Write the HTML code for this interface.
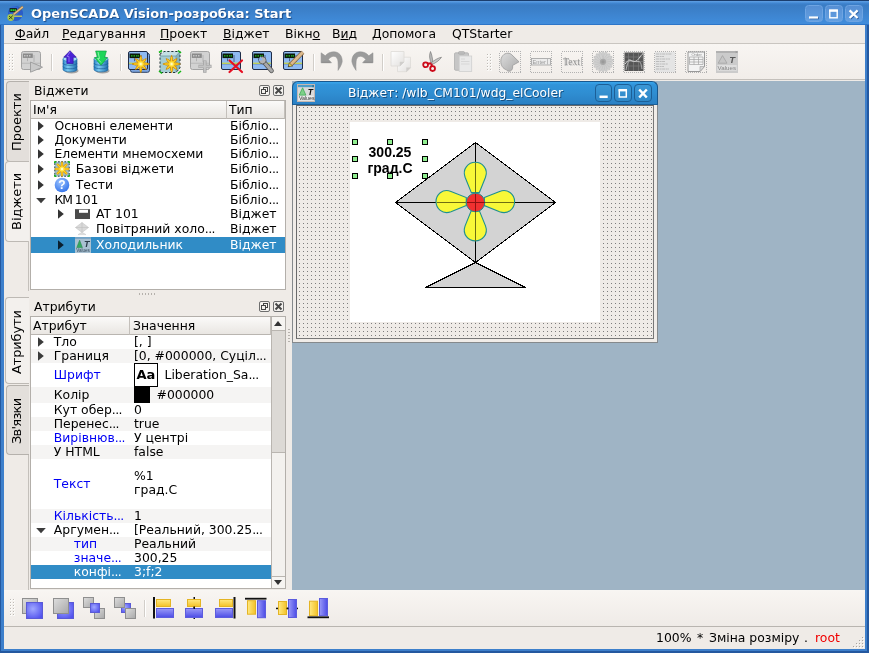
<!DOCTYPE html>
<html><head><meta charset="utf-8"><title>OpenSCADA Vision</title>
<style>
*{box-sizing:border-box;margin:0;padding:0}
html,body{width:869px;height:653px;overflow:hidden;background:#efebe7}
body{position:relative;will-change:transform;font-family:"DejaVu Sans","Liberation Sans",sans-serif;font-size:12.4px;color:#000}
div,span,svg{position:absolute}
#frame{left:0;top:0;width:869px;height:653px;background:#3d7fcb;border:solid #24589f;border-width:0 2px 2px 1px}
#titlebar{left:0;top:0;width:869px;height:25px;background:linear-gradient(#1b3e6e 0,#1b3e6e 1px,#5c9de2 1px,#5698de 2px,#4187d3 3px,#3a7cc4 5px,#3b7fc8 9px,#418ddc 24px,#2d75c8 24px)}
#title{left:31px;top:6px;font-weight:bold;font-size:13px;color:#fff;white-space:nowrap;text-shadow:1px 1px 1px #1b4a85}
.tbtn{top:4.5px;width:17.5px;height:17.5px;border:1px solid #6ea4e2;border-radius:3.5px;background:linear-gradient(#568fd4,#639fe1)}
#client{left:4px;top:25px;width:861px;height:624px;background:#efebe7}
#menubar{left:0;top:0;width:861px;height:18px;background:#efebe7}
#menubar span{top:1px;white-space:nowrap}
u{text-decoration:underline;text-underline-offset:1px}
#toolbar{left:0;top:18px;width:861px;height:37px;border-top:1px solid #c9c5c0;border-bottom:1px solid #c4c0bb;background:linear-gradient(#f8f5f2,#f1ede9)}
#mdi{left:288px;top:56px;width:573px;height:509px;background:#9fb4c5}
#btoolbar{left:0;top:565px;width:861px;height:37px;border-top:1px solid #f8f6f3;border-bottom:1px solid #b9b5b0;background:linear-gradient(#f8f5f2,#efebe7)}
#status{left:0;top:602px;width:861px;height:22px;background:#efebe7}
#status span{top:3px;white-space:nowrap}
.ic{top:7px;width:22px;height:22px}
.sep{top:10px;width:2px;height:17px;border-left:1px solid #c8c4bf;border-right:1px solid #fff}
.hdl{top:10px;width:5px;height:17px;background-image:radial-gradient(circle,#b9b5b0 0.7px,transparent 1px);background-size:3px 3px}
/* dock */
.vtab{left:3px;width:22px;border:1px solid #b5b1ac;border-right:none;border-radius:4px 0 0 4px;background:#e3dfdb}
.vtab.act{left:1px;width:24px;background:#f3f0ed;border-color:#bdb9b4}
.vtxt{white-space:nowrap;transform-origin:0 0;transform:rotate(-90deg);font-size:13px;line-height:16px;height:16px}
.dtitle{left:30px;white-space:nowrap}
  .dbtn{width:11px;height:11px;border:1px solid #6e6e6e;border-radius:2px;background:#f4f2ef}
.tree{left:26px;width:256px;background:#fff;border:1px solid #b3afaa;overflow:hidden}
.hdr{left:0;top:0;height:17px;background:linear-gradient(#fbfaf9,#e9e6e2);border-bottom:1px solid #b9b5b0;border-right:1px solid #c4c0bb}
.hdr span{top:1px;left:3px;white-space:nowrap}
.r{left:0;white-space:nowrap}
.r span{white-space:nowrap}
i{font-style:normal;letter-spacing:-.55px}
.alt{background:#f5f4f3}
.sel{background:#308cc6;color:#fff}
.blue{color:#0000f5}
.arr{width:0;height:0;border-left:6px solid #333;border-top:4px solid transparent;border-bottom:4px solid transparent}
.arrd{width:0;height:0;border-top:6px solid #333;border-left:4px solid transparent;border-right:4px solid transparent}
.sbtn{top:3px;width:17.500px;height:18px;border:1px solid #1c5f97;border-radius:4px;background:linear-gradient(#3b97d6,#2e88c8)}
.h{width:6px;height:6px;border:1px solid #000;background:#90ee90}
</style></head><body>
<div id="frame"></div>
<div id="titlebar">
<svg width="17" height="17" viewBox="0 0 17 17" style="left:7px;top:5px"><circle cx="8.500" cy="8.500" r="7.500" fill="#2a5cc8"/><circle cx="7" cy="6" r="5" fill="#3d78dc" opacity=".6"/><rect x="2.500" y="3" width="7.500" height="4.200" rx=".8" fill="#16242e"/><path d="M3.500 5.100h5.500" stroke="#25d825" stroke-width="1.600" stroke-dasharray="1.500 .5"/><path d="M6.500 9.500L15.800 1.800" stroke="#8a6a40" stroke-width="2.600"/><path d="M6.500 9.500L15.800 1.800" stroke="#e0bc88" stroke-width="1.600"/><path d="M6 11.200h9" stroke="#d8dc50" stroke-width="1.200"/><circle cx="3.800" cy="12.500" r="3.400" fill="#a9c94c"/><path d="M1.800 14.200l4-3.600M2 11l3.500 3" stroke="#2c3a14" stroke-width=".9"/></svg>
<div id="title">OpenSCADA Vision-розробка: Start</div>
<div class="tbtn" style="left:805px"><svg width="16" height="16" style="left:0;top:0"><path d="M3.800 12.300h9" stroke="#2a5da0" stroke-width="2"/><path d="M3 11.500h9" stroke="#fff" stroke-width="2.200"/></svg></div>
<div class="tbtn" style="left:825px"><svg width="16" height="16" style="left:0;top:0"><rect x="3.800" y="4.400" width="7.400" height="7.400" fill="none" stroke="#fff" stroke-width="1.400"/><path d="M3.100 4.600h8.800" stroke="#fff" stroke-width="2.400"/></svg></div>
<div class="tbtn" style="left:845px"><svg width="16" height="16" style="left:0;top:0"><path d="M4.400 5.200l8 7.600M12.400 5.200l-8 7.600" stroke="#2a5da0" stroke-width="2"/><path d="M3.600 4.400l8 7.600M11.600 4.400l-8 7.600" stroke="#fff" stroke-width="2.300"/></svg></div>
</div>
<div id="client">
<div id="menubar">
<span style="left:11px"><u>Ф</u>айл</span>
<span style="left:58px"><u>Р</u>едагування</span>
<span style="left:156px"><u>П</u>роект</span>
<span style="left:219px"><u>В</u>іджет</span>
<span style="left:281px">Вікн<u>о</u></span>
<span style="left:328px">В<u>и</u>д</span>
<span style="left:368px"><u>Д</u>опомога</span>
<span style="left:448px">QTStarter</span>
</div>
<svg width="0" height="0" style="left:0;top:0"><defs>
<linearGradient id="gcyl" x1="0" x2="1"><stop offset="0" stop-color="#2e86c8"/><stop offset=".35" stop-color="#7ccbf2"/><stop offset="1" stop-color="#1f6eae"/></linearGradient>
<linearGradient id="gblue" x1="0" y1="0" x2="1" y2="1"><stop offset="0" stop-color="#9ab8ff"/><stop offset="1" stop-color="#4a4af0"/></linearGradient>
<radialGradient id="gblue2" cx=".4" cy=".4" r=".7"><stop offset="0" stop-color="#a0a8ff"/><stop offset="1" stop-color="#5252ee"/></radialGradient>
<linearGradient id="ggray" x1="0" y1="0" x2="1" y2="1"><stop offset="0" stop-color="#dedede"/><stop offset="1" stop-color="#a8a8a8"/></linearGradient>
<linearGradient id="gyel" x1="0" y1="0" x2="0" y2="1"><stop offset="0" stop-color="#ffe982"/><stop offset="1" stop-color="#f3c228"/></linearGradient>
<linearGradient id="gyelh" x1="0" y1="0" x2="1" y2="0"><stop offset="0" stop-color="#ffe982"/><stop offset="1" stop-color="#f3c228"/></linearGradient>
<linearGradient id="gbl" x1="0" y1="0" x2="0" y2="1"><stop offset="0" stop-color="#9a9af8"/><stop offset="1" stop-color="#4c4ce6"/></linearGradient>
<linearGradient id="gblh" x1="0" y1="0" x2="1" y2="0"><stop offset="0" stop-color="#9a9af8"/><stop offset="1" stop-color="#4c4ce6"/></linearGradient>
<radialGradient id="gstar"><stop offset="0" stop-color="#fff27a"/><stop offset=".45" stop-color="#ffd92e"/><stop offset="1" stop-color="#e09a00"/></radialGradient>
<linearGradient id="gpaper" x1="0" y1="0" x2="1" y2="1"><stop offset="0" stop-color="#ffffff"/><stop offset="1" stop-color="#e2e0de"/></linearGradient>
</defs></svg>
<div id="toolbar"></div>
<div style="left:5px;top:29px;width:2px;height:2px;background:#fbfaf8"></div><div style="left:5px;top:29px;width:1px;height:1px;background:#bfbbb6"></div>
<div style="left:5px;top:32px;width:2px;height:2px;background:#fbfaf8"></div><div style="left:5px;top:32px;width:1px;height:1px;background:#bfbbb6"></div>
<div style="left:5px;top:35px;width:2px;height:2px;background:#fbfaf8"></div><div style="left:5px;top:35px;width:1px;height:1px;background:#bfbbb6"></div>
<div style="left:5px;top:38px;width:2px;height:2px;background:#fbfaf8"></div><div style="left:5px;top:38px;width:1px;height:1px;background:#bfbbb6"></div>
<div style="left:5px;top:41px;width:2px;height:2px;background:#fbfaf8"></div><div style="left:5px;top:41px;width:1px;height:1px;background:#bfbbb6"></div>
<div style="left:5px;top:44px;width:2px;height:2px;background:#fbfaf8"></div><div style="left:5px;top:44px;width:1px;height:1px;background:#bfbbb6"></div>
<div style="left:8px;top:29px;width:2px;height:2px;background:#fbfaf8"></div><div style="left:8px;top:29px;width:1px;height:1px;background:#bfbbb6"></div>
<div style="left:8px;top:32px;width:2px;height:2px;background:#fbfaf8"></div><div style="left:8px;top:32px;width:1px;height:1px;background:#bfbbb6"></div>
<div style="left:8px;top:35px;width:2px;height:2px;background:#fbfaf8"></div><div style="left:8px;top:35px;width:1px;height:1px;background:#bfbbb6"></div>
<div style="left:8px;top:38px;width:2px;height:2px;background:#fbfaf8"></div><div style="left:8px;top:38px;width:1px;height:1px;background:#bfbbb6"></div>
<div style="left:8px;top:41px;width:2px;height:2px;background:#fbfaf8"></div><div style="left:8px;top:41px;width:1px;height:1px;background:#bfbbb6"></div>
<div style="left:8px;top:44px;width:2px;height:2px;background:#fbfaf8"></div><div style="left:8px;top:44px;width:1px;height:1px;background:#bfbbb6"></div>
<svg width="22" height="22" viewBox="0 0 22 22" style="left:17px;top:26px;overflow:visible"><g transform="translate(0 0)"><rect x=".5" y=".5" width="19" height="18" rx="2" fill="#d2d2d2" stroke="#a3a3a3"/><rect x="1.8" y="2.5" width="10" height="4.4" fill="#8a8a8a"/><path d="M3 4.7h1.5M5.5 4.7h1.5M8 4.7h1.5" stroke="#c4c4c4" stroke-width="1.4"/><path d="M6.5 7.2v3M13 4v7" stroke="#b2b2b2" stroke-width="1"/><path d="M1 12.3h18" stroke="#bdbdbd" stroke-width="1.2"/></g><path d="M9.5 11L21.5 16.2L9.5 21.2Z" fill="#c9c9c9" stroke="#9c9c9c" stroke-width=".9"/></svg>
<div style="left:47px;top:29px;width:1px;height:17px;background:#d2cec9"></div><div style="left:48px;top:29px;width:1px;height:17px;background:#fff"></div>
<svg width="22" height="22" viewBox="0 0 22 22" style="left:58px;top:26px;overflow:visible"><ellipse cx="8" cy="19" rx="7" ry="2.6" fill="#1c1c1c" opacity=".35" transform="translate(1.6 .8)"/><path d="M1 8v10.5c0 3.2 14 3.2 14 0V8Z" fill="url(#gcyl)" stroke="#1b5f9a" stroke-width=".6"/><path d="M1 12c0 3 14 3 14 0M1 15.5c0 3 14 3 14 0" fill="none" stroke="#1b5f9a" stroke-width=".7"/><ellipse cx="8" cy="8" rx="7" ry="2.6" fill="#a5dcf6" stroke="#2b7fbd" stroke-width=".6"/><path d="M8-0.3L14.3 6.2H11.2V12.5H4.8V6.2H1.7Z" fill="#4a22d6" stroke="#2c129a" stroke-width=".6"/><path d="M8 1L5 5.5H7V11" stroke="#8a6af0" stroke-width="1" fill="none"/></svg>
<svg width="22" height="22" viewBox="0 0 22 22" style="left:89px;top:26px;overflow:visible"><ellipse cx="8" cy="19" rx="7" ry="2.6" fill="#1c1c1c" opacity=".35" transform="translate(1.6 .8)"/><path d="M1 8v10.5c0 3.2 14 3.2 14 0V8Z" fill="url(#gcyl)" stroke="#1b5f9a" stroke-width=".6"/><path d="M1 12c0 3 14 3 14 0M1 15.5c0 3 14 3 14 0" fill="none" stroke="#1b5f9a" stroke-width=".7"/><ellipse cx="8" cy="8" rx="7" ry="2.6" fill="#a5dcf6" stroke="#2b7fbd" stroke-width=".6"/><path d="M2.6 0H13.4L11.6 6.5H14.6L8 14.2L1.4 6.5H4.4Z" fill="#1fd65a" stroke="#0c9a3a" stroke-width=".6"/><path d="M5 1L6.5 7.5H4.5L8 11.5" stroke="#8af0a8" stroke-width="1" fill="none"/></svg>
<div style="left:116px;top:29px;width:1px;height:17px;background:#d2cec9"></div><div style="left:117px;top:29px;width:1px;height:17px;background:#fff"></div>
<svg width="22" height="22" viewBox="0 0 22 22" style="left:124px;top:26px;overflow:visible"><rect x="2.5" y="2.3" width="19" height="19" rx="2" fill="#7ea6e0" stroke="#2c4266"/><g transform="translate(0 0)"><rect x=".5" y=".5" width="19" height="18" rx="1.500" fill="#8fbaf2" stroke="#1e2c48"/><rect x="1.5" y="2.5" width="10.5" height="4.6" fill="#0a1a0a"/><path d="M3 4.8h1.5M5.5 4.8h1.5M8 4.8h1.5M10 4.8h1" stroke="#25c425" stroke-width="1.300"/><path d="M6.5 7.2v3M13 4v7" stroke="#4a6488" stroke-width="1"/><path d="M1 12.3h18" stroke="#d2de3c" stroke-width="1.3"/><path d="M1 13.3h18" stroke="#6f93c8" stroke-width=".8"/></g><g transform="translate(12.8 13)"><g fill="#f0ae00" stroke="#d28c00" stroke-width=".8" stroke-linejoin="round"><path d="M-.500 0L-1.150 -5.22L0 -8.70L1.150 -5.22L.500 0Z" transform="rotate(0)"/><path d="M-.500 0L-1.150 -4.59L0 -7.66L1.150 -4.59L.500 0Z" transform="rotate(45)"/><path d="M-.500 0L-1.150 -5.22L0 -8.70L1.150 -5.22L.500 0Z" transform="rotate(90)"/><path d="M-.500 0L-1.150 -4.59L0 -7.66L1.150 -4.59L.500 0Z" transform="rotate(135)"/><path d="M-.500 0L-1.150 -5.22L0 -8.70L1.150 -5.22L.500 0Z" transform="rotate(180)"/><path d="M-.500 0L-1.150 -4.59L0 -7.66L1.150 -4.59L.500 0Z" transform="rotate(225)"/><path d="M-.500 0L-1.150 -5.22L0 -8.70L1.150 -5.22L.500 0Z" transform="rotate(270)"/><path d="M-.500 0L-1.150 -4.59L0 -7.66L1.150 -4.59L.500 0Z" transform="rotate(315)"/></g><g stroke="#ffd52a" stroke-width="1" fill="none"><path d="M0 0V-6.96" transform="rotate(0)"/><path d="M0 0V-6.12" transform="rotate(45)"/><path d="M0 0V-6.96" transform="rotate(90)"/><path d="M0 0V-6.12" transform="rotate(135)"/><path d="M0 0V-6.96" transform="rotate(180)"/><path d="M0 0V-6.12" transform="rotate(225)"/><path d="M0 0V-6.96" transform="rotate(270)"/><path d="M0 0V-6.12" transform="rotate(315)"/></g><circle r="3" fill="#ffd92e"/><circle r="2" fill="#ffee6e"/><circle r="1" fill="#fffbd0"/></g></svg>
<svg width="22" height="22" viewBox="0 0 22 22" style="left:155px;top:26px;overflow:visible"><path d="M1 5L5 0.500H21V17L17 21.500H1Z" fill="#a6ccd3"/><path d="M1 5L5 .500H21L17 5Z" fill="#c4e0e4"/><path d="M17 5L21 .500V17L17 21.500Z" fill="#86b4bd"/><path d="M1 5H17V21.500M17 5L21 0.500" fill="none" stroke="#6f9aa2" stroke-width=".8"/><path d="M1 3L5 0.5H21V17L17 21.5H1Z" fill="none" stroke="#22343a" stroke-width="1" stroke-dasharray="2.2 1.8"/><path d="M0 1.5l3-2M0 20l3 2.5M19-0.5l3 2.5M19 22.5l3-2.5" stroke="#14b814" stroke-width="1.6"/><g transform="translate(12.6 13)"><g fill="#f0ae00" stroke="#d28c00" stroke-width=".8" stroke-linejoin="round"><path d="M-.500 0L-1.150 -5.22L0 -8.70L1.150 -5.22L.500 0Z" transform="rotate(0)"/><path d="M-.500 0L-1.150 -4.59L0 -7.66L1.150 -4.59L.500 0Z" transform="rotate(45)"/><path d="M-.500 0L-1.150 -5.22L0 -8.70L1.150 -5.22L.500 0Z" transform="rotate(90)"/><path d="M-.500 0L-1.150 -4.59L0 -7.66L1.150 -4.59L.500 0Z" transform="rotate(135)"/><path d="M-.500 0L-1.150 -5.22L0 -8.70L1.150 -5.22L.500 0Z" transform="rotate(180)"/><path d="M-.500 0L-1.150 -4.59L0 -7.66L1.150 -4.59L.500 0Z" transform="rotate(225)"/><path d="M-.500 0L-1.150 -5.22L0 -8.70L1.150 -5.22L.500 0Z" transform="rotate(270)"/><path d="M-.500 0L-1.150 -4.59L0 -7.66L1.150 -4.59L.500 0Z" transform="rotate(315)"/></g><g stroke="#ffd52a" stroke-width="1" fill="none"><path d="M0 0V-6.96" transform="rotate(0)"/><path d="M0 0V-6.12" transform="rotate(45)"/><path d="M0 0V-6.96" transform="rotate(90)"/><path d="M0 0V-6.12" transform="rotate(135)"/><path d="M0 0V-6.96" transform="rotate(180)"/><path d="M0 0V-6.12" transform="rotate(225)"/><path d="M0 0V-6.96" transform="rotate(270)"/><path d="M0 0V-6.12" transform="rotate(315)"/></g><circle r="3" fill="#ffd92e"/><circle r="2" fill="#ffee6e"/><circle r="1" fill="#fffbd0"/></g></svg>
<svg width="22" height="22" viewBox="0 0 22 22" style="left:186px;top:26px;overflow:visible"><g transform="translate(0 0)"><rect x=".5" y=".5" width="19" height="18" rx="2" fill="#d2d2d2" stroke="#a3a3a3"/><rect x="1.8" y="2.5" width="10" height="4.4" fill="#8a8a8a"/><path d="M3 4.7h1.5M5.5 4.7h1.5M8 4.7h1.5" stroke="#c4c4c4" stroke-width="1.4"/><path d="M6.5 7.2v3M13 4v7" stroke="#b2b2b2" stroke-width="1"/><path d="M1 12.3h18" stroke="#bdbdbd" stroke-width="1.2"/></g><path d="M8.5 15.4H21.5M14.8 9.5V21.8" stroke="#a0a0a0" stroke-width="3.4"/><path d="M9 15.4H21M14.8 10V21.3" stroke="#c4c4c4" stroke-width="2"/></svg>
<svg width="22" height="22" viewBox="0 0 22 22" style="left:217px;top:26px;overflow:visible"><g transform="translate(0 0)"><rect x=".5" y=".5" width="19" height="18" rx="1.500" fill="#8fbaf2" stroke="#1e2c48"/><rect x="1.5" y="2.5" width="10.5" height="4.6" fill="#0a1a0a"/><path d="M3 4.8h1.5M5.5 4.8h1.5M8 4.8h1.5M10 4.8h1" stroke="#25c425" stroke-width="1.300"/><path d="M6.5 7.2v3M13 4v7" stroke="#4a6488" stroke-width="1"/><path d="M1 12.3h18" stroke="#d2de3c" stroke-width="1.3"/><path d="M1 13.3h18" stroke="#6f93c8" stroke-width=".8"/></g><path d="M8.5 9.5L21 21M21 9.5L8.5 21" stroke="#e60f22" stroke-width="2.2" stroke-linecap="round"/></svg>
<svg width="22" height="22" viewBox="0 0 22 22" style="left:248px;top:26px;overflow:visible"><g transform="translate(0 0)"><rect x=".5" y=".5" width="19" height="18" rx="1.500" fill="#8fbaf2" stroke="#1e2c48"/><rect x="1.5" y="2.5" width="10.5" height="4.6" fill="#0a1a0a"/><path d="M3 4.8h1.5M5.5 4.8h1.5M8 4.8h1.5M10 4.8h1" stroke="#25c425" stroke-width="1.300"/><path d="M6.5 7.2v3M13 4v7" stroke="#4a6488" stroke-width="1"/><path d="M1 12.3h18" stroke="#d2de3c" stroke-width="1.3"/><path d="M1 13.3h18" stroke="#6f93c8" stroke-width=".8"/></g><path d="M11.5 10.5L19.5 19.8" stroke="#555" stroke-width="4.6" stroke-linecap="round"/><path d="M11.5 10.5L19.5 19.8" stroke="#a9a9a9" stroke-width="3" stroke-linecap="round"/><circle cx="10.5" cy="9.3" r="3.6" fill="#b4b4b4" stroke="#555" stroke-width=".8"/><path d="M8.2 5.2L11 9L6.4 10.2Z" fill="#8db6ee"/></svg>
<svg width="22" height="22" viewBox="0 0 22 22" style="left:279px;top:26px;overflow:visible"><g transform="translate(0 0)"><rect x=".5" y=".5" width="19" height="18" rx="1.500" fill="#8fbaf2" stroke="#1e2c48"/><rect x="1.5" y="2.5" width="10.5" height="4.6" fill="#0a1a0a"/><path d="M3 4.8h1.5M5.5 4.8h1.5M8 4.8h1.5M10 4.8h1" stroke="#25c425" stroke-width="1.300"/><path d="M6.5 7.2v3M13 4v7" stroke="#4a6488" stroke-width="1"/><path d="M1 12.3h18" stroke="#d2de3c" stroke-width="1.3"/><path d="M1 13.3h18" stroke="#6f93c8" stroke-width=".8"/></g><path d="M7.5 13.8L19.8 1.2" stroke="#7c5c3a" stroke-width="4.2"/><path d="M7.5 13.8L19.8 1.2" stroke="#dcb98c" stroke-width="3"/><path d="M5.2 15.8L6.2 11.8L9.6 15Z" fill="#e8d44a" stroke="#4a3a1a" stroke-width=".6"/><path d="M5.2 15.8l1.4-.4-.9-1Z" fill="#222"/></svg>
<div style="left:309px;top:29px;width:1px;height:17px;background:#d2cec9"></div><div style="left:310px;top:29px;width:1px;height:17px;background:#fff"></div>
<svg width="22" height="22" viewBox="0 0 22 22" style="left:317px;top:26px;overflow:visible"><path d="M0.1 1.8L0.1 11.8L10.5 11.8L7.4 8.4C9 6.5 11 5.3 12.9 5.3C15.5 5.5 17 8 17 10.8C17.3 14 17.2 17 17 19.4C19 16.5 20.5 14 21.2 10.8C21.5 5 18 0.8 12.9 0.8C9.5 0.8 6.5 2 4.3 4.800Z" fill="#9b9b9b" stroke="#8f8f8f" stroke-width=".5"/><path d="M0.6 11.300H9.5" stroke="#878787" stroke-width=".8"/></svg>
<svg width="22" height="22" viewBox="0 0 22 22" style="left:348px;top:26px;overflow:visible"><g transform="translate(21.1 0) scale(-1 1)"><path d="M0.1 1.8L0.1 11.8L10.5 11.8L7.4 8.4C9 6.5 11 5.3 12.9 5.3C15.5 5.5 17 8 17 10.8C17.3 14 17.2 17 17 19.4C19 16.5 20.5 14 21.2 10.8C21.5 5 18 0.8 12.9 0.8C9.5 0.8 6.5 2 4.3 4.800Z" fill="#9b9b9b" stroke="#8f8f8f" stroke-width=".5"/><path d="M0.6 11.300H9.5" stroke="#878787" stroke-width=".8"/></g></svg>
<div style="left:378px;top:29px;width:1px;height:17px;background:#d2cec9"></div><div style="left:379px;top:29px;width:1px;height:17px;background:#fff"></div>
<svg width="22" height="22" viewBox="0 0 22 22" style="left:386px;top:26px;overflow:visible"><g transform="translate(7 5.7)"><path d="M.5 .5H13.5V11L9.5 15H.5Z" fill="url(#gpaper)" stroke="#dddad7" stroke-width=".8"/><path d="M13.5 11H9.5V15Z" fill="#cfcdcb" stroke="#d3d1ce" stroke-width=".5"/></g><g transform="translate(.5 0)"><path d="M.5 .5H13.5V11L9.5 15H.5Z" fill="url(#gpaper)" stroke="#dddad7" stroke-width=".8"/><path d="M13.5 11H9.5V15Z" fill="#cfcdcb" stroke="#d3d1ce" stroke-width=".5"/></g></svg>
<svg width="22" height="22" viewBox="0 0 22 22" style="left:417px;top:26px;overflow:visible"><path d="M9.5 0.5C8 4 8.3 8 10.3 12.2L11.8 11C11.5 7 10.8 3.5 9.5 0.5Z" fill="#b9b9b9" stroke="#6e6e6e" stroke-width=".6"/><path d="M20.5 6.2C17 7 13.5 9 10 12L11.4 13.4C15 11.5 18.5 9.5 20.5 6.200Z" fill="#c9c9c9" stroke="#6e6e6e" stroke-width=".6"/><circle cx="4.6" cy="13.8" r="2.400" fill="none" stroke="#cc0a1a" stroke-width="1.800"/><circle cx="11.600" cy="17.600" r="2.400" fill="none" stroke="#cc0a1a" stroke-width="1.800"/><path d="M6.8 12.8L10 12.2M10.6 15.2L10.6 12.6" stroke="#cc0a1a" stroke-width="2"/></svg>
<svg width="22" height="22" viewBox="0 0 22 22" style="left:448px;top:26px;overflow:visible"><rect x="2.5" y="1.8" width="14" height="17.5" rx="1.2" fill="#c6c6c6" stroke="#b0b0b0" stroke-width=".8"/><rect x="6.5" y=".6" width="6" height="2.6" rx="1" fill="#bdbdbd" stroke="#a6a6a6" stroke-width=".6"/><rect x="7.2" y="5" width="12.5" height="15.5" fill="#e9e9e9" stroke="#cfcfcf" stroke-width=".8"/><path d="M9 8h4M9 10.5h8.5M9 13h8.5" stroke="#d2d2d2" stroke-width=".8"/></svg>
<div style="left:483px;top:29px;width:2px;height:2px;background:#fbfaf8"></div><div style="left:483px;top:29px;width:1px;height:1px;background:#bfbbb6"></div>
<div style="left:483px;top:32px;width:2px;height:2px;background:#fbfaf8"></div><div style="left:483px;top:32px;width:1px;height:1px;background:#bfbbb6"></div>
<div style="left:483px;top:35px;width:2px;height:2px;background:#fbfaf8"></div><div style="left:483px;top:35px;width:1px;height:1px;background:#bfbbb6"></div>
<div style="left:483px;top:38px;width:2px;height:2px;background:#fbfaf8"></div><div style="left:483px;top:38px;width:1px;height:1px;background:#bfbbb6"></div>
<div style="left:483px;top:41px;width:2px;height:2px;background:#fbfaf8"></div><div style="left:483px;top:41px;width:1px;height:1px;background:#bfbbb6"></div>
<div style="left:483px;top:44px;width:2px;height:2px;background:#fbfaf8"></div><div style="left:483px;top:44px;width:1px;height:1px;background:#bfbbb6"></div>
<div style="left:486px;top:29px;width:2px;height:2px;background:#fbfaf8"></div><div style="left:486px;top:29px;width:1px;height:1px;background:#bfbbb6"></div>
<div style="left:486px;top:32px;width:2px;height:2px;background:#fbfaf8"></div><div style="left:486px;top:32px;width:1px;height:1px;background:#bfbbb6"></div>
<div style="left:486px;top:35px;width:2px;height:2px;background:#fbfaf8"></div><div style="left:486px;top:35px;width:1px;height:1px;background:#bfbbb6"></div>
<div style="left:486px;top:38px;width:2px;height:2px;background:#fbfaf8"></div><div style="left:486px;top:38px;width:1px;height:1px;background:#bfbbb6"></div>
<div style="left:486px;top:41px;width:2px;height:2px;background:#fbfaf8"></div><div style="left:486px;top:41px;width:1px;height:1px;background:#bfbbb6"></div>
<div style="left:486px;top:44px;width:2px;height:2px;background:#fbfaf8"></div><div style="left:486px;top:44px;width:1px;height:1px;background:#bfbbb6"></div>
<svg width="22" height="22" viewBox="0 0 22 22" style="left:495px;top:26px;overflow:visible"><rect x=".5" y=".5" width="21" height="21" fill="none" stroke="#b2b2b2" stroke-width="1" stroke-dasharray="1 1" shape-rendering="crispEdges"/><path d="M9 2.2C4.5 2.2 1.8 6 1.8 10.5C1.8 14 3.5 17.5 7.5 18.8C8 20 9.5 20.5 11.5 20C13.5 19 14 16.5 13.5 14.5L20 10.8L13 4C12 2.8 10.5 2.2 9 2.2Z" fill="url(#ggray)" stroke="#9a9a9a" stroke-width=".8"/></svg>
<svg width="22" height="22" viewBox="0 0 22 22" style="left:526px;top:26px;overflow:visible"><rect x=".5" y=".5" width="21" height="21" fill="none" stroke="#b2b2b2" stroke-width="1" stroke-dasharray="1 1" shape-rendering="crispEdges"/><rect x="1.5" y="7.5" width="19" height="6.5" fill="#ececec" stroke="#a8a8a8" stroke-width=".9"/><path d="M17.5 8v5.500" stroke="#b0b0b0" stroke-width=".8"/><text x="2.6" y="13" font-family="Liberation Sans,sans-serif" font-size="5.6" fill="#9a9a9a">Enter</text></svg>
<svg width="22" height="22" viewBox="0 0 22 22" style="left:557px;top:26px;overflow:visible"><rect x=".5" y=".5" width="21" height="21" fill="none" stroke="#b2b2b2" stroke-width="1" stroke-dasharray="1 1" shape-rendering="crispEdges"/><text x="3" y="14.600" font-family="Liberation Serif,serif" font-size="9.500" fill="#cfcfcf">Text</text><text x="2.200" y="13.800" font-family="Liberation Serif,serif" font-size="9.500" fill="#8f8f8f">Text</text><path d="M4.200 6v9M20.500 6v9" stroke="#a8a8a8" stroke-width=".7"/></svg>
<svg width="22" height="22" viewBox="0 0 22 22" style="left:588px;top:26px;overflow:visible"><rect x=".5" y=".5" width="21" height="21" fill="none" stroke="#b2b2b2" stroke-width="1" stroke-dasharray="1 1" shape-rendering="crispEdges"/><g transform="translate(11 10.8)"><ellipse cx="0" cy="-6.3" rx="1.5" ry="4.2" transform="rotate(0)" fill="#cfcfcf" stroke="#b9b9b9" stroke-width=".4"/><ellipse cx="0" cy="-6.3" rx="1.5" ry="4.2" transform="rotate(20)" fill="#cfcfcf" stroke="#b9b9b9" stroke-width=".4"/><ellipse cx="0" cy="-6.3" rx="1.5" ry="4.2" transform="rotate(40)" fill="#cfcfcf" stroke="#b9b9b9" stroke-width=".4"/><ellipse cx="0" cy="-6.3" rx="1.5" ry="4.2" transform="rotate(60)" fill="#cfcfcf" stroke="#b9b9b9" stroke-width=".4"/><ellipse cx="0" cy="-6.3" rx="1.5" ry="4.2" transform="rotate(80)" fill="#cfcfcf" stroke="#b9b9b9" stroke-width=".4"/><ellipse cx="0" cy="-6.3" rx="1.5" ry="4.2" transform="rotate(100)" fill="#cfcfcf" stroke="#b9b9b9" stroke-width=".4"/><ellipse cx="0" cy="-6.3" rx="1.5" ry="4.2" transform="rotate(120)" fill="#cfcfcf" stroke="#b9b9b9" stroke-width=".4"/><ellipse cx="0" cy="-6.3" rx="1.5" ry="4.2" transform="rotate(140)" fill="#cfcfcf" stroke="#b9b9b9" stroke-width=".4"/><ellipse cx="0" cy="-6.3" rx="1.5" ry="4.2" transform="rotate(160)" fill="#cfcfcf" stroke="#b9b9b9" stroke-width=".4"/><ellipse cx="0" cy="-6.3" rx="1.5" ry="4.2" transform="rotate(180)" fill="#cfcfcf" stroke="#b9b9b9" stroke-width=".4"/><ellipse cx="0" cy="-6.3" rx="1.5" ry="4.2" transform="rotate(200)" fill="#cfcfcf" stroke="#b9b9b9" stroke-width=".4"/><ellipse cx="0" cy="-6.3" rx="1.5" ry="4.2" transform="rotate(220)" fill="#cfcfcf" stroke="#b9b9b9" stroke-width=".4"/><ellipse cx="0" cy="-6.3" rx="1.5" ry="4.2" transform="rotate(240)" fill="#cfcfcf" stroke="#b9b9b9" stroke-width=".4"/><ellipse cx="0" cy="-6.3" rx="1.5" ry="4.2" transform="rotate(260)" fill="#cfcfcf" stroke="#b9b9b9" stroke-width=".4"/><ellipse cx="0" cy="-6.3" rx="1.5" ry="4.2" transform="rotate(280)" fill="#cfcfcf" stroke="#b9b9b9" stroke-width=".4"/><ellipse cx="0" cy="-6.3" rx="1.5" ry="4.2" transform="rotate(300)" fill="#cfcfcf" stroke="#b9b9b9" stroke-width=".4"/><ellipse cx="0" cy="-6.3" rx="1.5" ry="4.2" transform="rotate(320)" fill="#cfcfcf" stroke="#b9b9b9" stroke-width=".4"/><ellipse cx="0" cy="-6.3" rx="1.5" ry="4.2" transform="rotate(340)" fill="#cfcfcf" stroke="#b9b9b9" stroke-width=".4"/><circle r="3.1" fill="#a9a9a9"/><circle r="1.6" fill="#9a9a9a"/></g></svg>
<svg width="22" height="22" viewBox="0 0 22 22" style="left:619px;top:26px;overflow:visible"><rect x=".5" y=".5" width="21" height="21" fill="none" stroke="#b2b2b2" stroke-width="1" stroke-dasharray="1 1" shape-rendering="crispEdges"/><rect x="1.5" y="1.5" width="19" height="18.5" fill="#565656"/><path d="M5.5 1.5v18.5M10.5 1.5v18.5M15.500 1.5v18.5M1.5 6h19M1.5 10.500h19M1.5 15h19" stroke="#7c7c7c" stroke-width=".7"/><path d="M2 13C4 11 5 8.500 7 9C9 9.5 10 11 12 10.500C15 10 17 5 20 2.500" fill="none" stroke="#d9d9d9" stroke-width="1"/><path d="M3 19C4 14 5 10 7 9.500C10 10 13 11 16 10.500C18 11 18.500 15 19 18" fill="none" stroke="#bdbdbd" stroke-width=".9"/></svg>
<svg width="22" height="22" viewBox="0 0 22 22" style="left:650px;top:26px;overflow:visible"><rect x=".5" y=".5" width="21" height="21" fill="none" stroke="#b2b2b2" stroke-width="1" stroke-dasharray="1 1" shape-rendering="crispEdges"/><rect x="1" y="1" width="20" height="20" fill="#e4e4e4"/><path d="M2 3h16M2 5.5h8M2 8h14M2 10.500h9M2 13h12M2 15.500h8M2 18h13" stroke="#b7b7b7" stroke-width=".9" stroke-dasharray="3 .6 2 .5"/></svg>
<svg width="22" height="22" viewBox="0 0 22 22" style="left:681px;top:26px;overflow:visible"><rect x=".5" y=".5" width="21" height="21" fill="none" stroke="#b2b2b2" stroke-width="1" stroke-dasharray="1 1" shape-rendering="crispEdges"/><path d="M3 1H19.5V15.500L15 20.500H3Z" fill="#f3f3f3" stroke="#8f8f8f" stroke-width=".9"/><path d="M19.5 15.500H15V20.500Z" fill="#d9d9d9" stroke="#9c9c9c" stroke-width=".6"/><text x="6.500" y="4.800" font-family="Liberation Sans,sans-serif" font-size="4" fill="#8a8a8a">Order</text><path d="M4.500 6h13.500M4.500 8.500h13.500M4.500 11h13.500M4.500 13.500h13.500M4.500 6v7.500M9 6v7.500M13.500 6v7.500M18 6v7.500" stroke="#a4a4a4" stroke-width=".7"/></svg>
<svg width="22" height="22" viewBox="0 0 22 22" style="left:712px;top:26px;overflow:visible"><rect x="0" y="0" width="22" height="22" fill="#cbcbcb"/><rect x="0" y="0" width="22" height="2" fill="#b1b1b1"/><path d="M19.500 .3l1.700 1.500M21.200 .3l-1.700 1.500" stroke="#8a8a8a" stroke-width=".5"/><path d="M6.500 4.600L11 12.200H2.200Z" fill="#c6c6c6" stroke="#a6a6a6" stroke-width=".9"/><text x="13.200" y="12" font-family="Liberation Sans,sans-serif" font-weight="bold" font-style="italic" font-size="9.500" fill="#5a5a5a">T</text><rect x="1.200" y="14" width="19.600" height="5.800" fill="#dedede"/><text x="1.600" y="19" font-family="Liberation Sans,sans-serif" font-size="6.200" fill="#858585">Values</text></svg>
<div id="dock">
<div class="vtab" style="left:2px;top:56px;width:23px;height:81px"></div>
<div class="vtxt" style="left:5px;top:125.5px;letter-spacing:0px">Проекти</div>
<div class="vtab act" style="left:0.5px;top:136px;width:24.5px;height:81px"></div>
<div class="vtxt" style="left:5px;top:205px;letter-spacing:0px">Віджети</div>
<div class="vtab act" style="left:0.5px;top:272px;width:24.5px;height:87px"></div>
<div class="vtxt" style="left:5px;top:348.5px;letter-spacing:-0.15px">Атрибути</div>
<div class="vtab" style="left:2px;top:360px;width:23px;height:70px"></div>
<div class="vtxt" style="left:5px;top:419px;letter-spacing:-0.75px">Зв'язки</div>
<div style="left:24px;top:216px;width:1px;height:50px;background:#c4c0bb"></div>
<div style="left:24px;top:430px;width:1px;height:135px;background:#c4c0bb"></div>
<div class="dtitle" style="left:30px;top:58px">Віджети</div>
<div class="dbtn" style="left:255px;top:60px"><svg width="9" height="9" style="left:0;top:0"><rect x="3.5" y="1.5" width="4" height="4" fill="none" stroke="#444"/><rect x="1.5" y="3.5" width="4" height="4" fill="#f4f2ef" stroke="#444"/></svg></div>
<div class="dbtn" style="left:269px;top:60px"><svg width="9" height="9" style="left:0;top:0"><path d="M1.5 1.5l6 6M7.5 1.5l-6 6" stroke="#484848" stroke-width="2"/></svg></div>
<div class="tree" style="left:26px;top:75px;width:256px;height:190px">
<div class="hdr" style="width:196px;height:18px"><span style="left:2px">Ім'я</span></div>
<div class="hdr" style="left:196px;width:58px;height:18px"><span style="left:2px">Тип</span></div>
<div class="r" style="top:18px;height:14px;width:254px;line-height:14px">
<svg width="7" height="10" style="left:7px;top:1.5px"><path d="M0 0.3L5.8 5L0 9.7Z" fill="#333"/></svg>
<span style="left:23.5px;top:0px">Основні елементи</span>
<span style="left:199px;top:0px">Бібліо<i>...</i></span>
</div>
<div class="r" style="top:32px;height:14px;width:254px;line-height:14px">
<svg width="7" height="10" style="left:7px;top:1.5px"><path d="M0 0.3L5.8 5L0 9.7Z" fill="#333"/></svg>
<span style="left:23.5px;top:0px">Документи</span>
<span style="left:199px;top:0px">Бібліо<i>...</i></span>
</div>
<div class="r" style="top:46px;height:14px;width:254px;line-height:14px">
<svg width="7" height="10" style="left:7px;top:1.5px"><path d="M0 0.3L5.8 5L0 9.7Z" fill="#333"/></svg>
<span style="left:23.5px;top:0px">Елементи мнемосхеми</span>
<span style="left:199px;top:0px">Бібліо<i>...</i></span>
</div>
<div class="r" style="top:60px;height:16px;width:254px;line-height:16px">
<svg width="7" height="10" style="left:7px;top:2.5px"><path d="M0 0.3L5.8 5L0 9.7Z" fill="#333"/></svg>
<svg width="16" height="16" viewBox="0 0 16 16" style="left:23px;top:0px"><rect x=".8" y=".8" width="14.400" height="14.400" fill="#9cc2cb"/><rect x=".8" y=".8" width="14.400" height="14.400" fill="none" stroke="#2a3e46" stroke-width="1" stroke-dasharray="1.800 1.400"/><path d="M0 2L2 0M14 0l2 2M0 14l2 2M16 14l-2 2" stroke="#14b814" stroke-width="1.600"/><path d="M8 1.800v12.400M1.800 8h12.400M3.700 3.700l8.600 8.600M12.300 3.700l-8.600 8.600" stroke="#d89400" stroke-width="2.400" stroke-linecap="round"/><path d="M8 1.800v12.400M1.800 8h12.400M3.700 3.700l8.600 8.600M12.300 3.700l-8.600 8.600" stroke="#ffcf26" stroke-width="1.300" stroke-linecap="round"/><circle cx="8" cy="8" r="2.600" fill="#ffe648"/><circle cx="8" cy="8" r="1.200" fill="#fffbd0"/></svg>
<span style="left:44.8px;top:0px">Базові віджети</span>
<span style="left:199px;top:0px">Бібліо<i>...</i></span>
</div>
<div class="r" style="top:76px;height:16px;width:254px;line-height:16px">
<svg width="7" height="10" style="left:7px;top:2.5px"><path d="M0 0.3L5.8 5L0 9.7Z" fill="#333"/></svg>
<svg width="16" height="16" viewBox="0 0 16 16" style="left:23px;top:0px"><defs><radialGradient id="qg" cx=".4" cy=".3" r=".8"><stop offset="0" stop-color="#9cc4ff"/><stop offset="1" stop-color="#2a6be8"/></radialGradient></defs><circle cx="8" cy="8" r="7.3" fill="url(#qg)"/><text x="8" y="12.3" font-family="Liberation Sans,sans-serif" font-weight="bold" font-size="12" fill="#fff" text-anchor="middle">?</text></svg>
<span style="left:44.8px;top:0px">Тести</span>
<span style="left:199px;top:0px">Бібліо<i>...</i></span>
</div>
<div class="r" style="top:92px;height:14px;width:254px;line-height:14px">
<svg width="10" height="7" style="left:4.5px;top:4.5px"><path d="M0.2 0L9.8 0L5 5.3Z" fill="#3c3c3c"/></svg>
<span style="left:23.5px;top:0px"><i style="letter-spacing:-1.05px">КМ </i>101</span>
<span style="left:199px;top:0px">Бібліо<i>...</i></span>
</div>
<div class="r" style="top:106px;height:14px;width:254px;line-height:14px">
<svg width="7" height="10" style="left:27px;top:1.5px"><path d="M0 0.3L5.8 5L0 9.7Z" fill="#333"/></svg>
<svg width="16" height="16" viewBox="0 0 16 16" style="left:44px;top:2px"><rect x="0" y="0" width="15" height="10" fill="#4b4b4b"/><rect x="4" y="0.5" width="9" height="3.3" fill="#fff"/><rect x="0" y="0" width="15" height="0.6" fill="#777"/></svg>
<span style="left:65.0px;top:0px">AT 101</span>
<span style="left:199px;top:0px">Віджет</span>
</div>
<div class="r" style="top:120px;height:16px;width:254px;line-height:16px">
<svg width="16" height="16" viewBox="0 0 16 16" style="left:44px;top:1px"><path d="M7 0.5L13.5 5.5L7 10.5L0.5 5.5Z" fill="#d9d9d9" stroke="#c4c4c4" stroke-width=".6"/><path d="M7 0.5v10M0.5 5.5h13" stroke="#c0c0c0" stroke-width=".6"/><path d="M7 10.3L11 12.6H3Z" fill="#dcdcdc" stroke="#c8c8c8" stroke-width=".5"/></svg>
<span style="left:65.0px;top:0px">Повітряний холо<i>...</i></span>
<span style="left:199px;top:0px">Віджет</span>
</div>
<div class="r sel" style="top:136px;height:16px;width:254px;line-height:16px">
<svg width="7" height="10" style="left:27px;top:2.5px"><path d="M0 0.3L5.8 5L0 9.7Z" fill="#0a1f2e"/></svg>
<svg width="16" height="16" viewBox="0 0 16 16" style="left:44px;top:0px"><rect x="0" y="0.5" width="16" height="15.5" fill="#a9c1d2"/><rect x="0" y="0.5" width="16" height="1.4" fill="#7ba3c4"/><path d="M4.6 3.2L7.4 10.6H1.8Z" fill="#35a860" stroke="#2b8a50" stroke-width=".6"/><text x="9" y="10.4" font-family="Liberation Sans,sans-serif" font-weight="bold" font-style="italic" font-size="9" fill="#2a3a48">T</text><text x="1.2" y="14.6" font-family="Liberation Sans,sans-serif" font-size="4.6" fill="#33485a">Values</text></svg>
<span style="left:65.0px;top:0px">Холодильник</span>
<span style="left:199px;top:0px">Віджет</span>
</div>
</div>
<div style="left:134px;top:267.5px;width:18px;height:2px;background-image:radial-gradient(circle,#b5b1ac 0.7px,transparent 1px);background-size:3px 2px"></div>
<div style="left:284px;top:303px;width:2px;height:15px;background-image:radial-gradient(circle,#b5b1ac 0.7px,transparent 1px);background-size:2px 3px"></div>
<div class="dtitle" style="left:30px;top:274px">Атрибути</div>
<div class="dbtn" style="left:255px;top:276px"><svg width="9" height="9" style="left:0;top:0"><rect x="3.5" y="1.5" width="4" height="4" fill="none" stroke="#444"/><rect x="1.5" y="3.5" width="4" height="4" fill="#f4f2ef" stroke="#444"/></svg></div>
<div class="dbtn" style="left:269px;top:276px"><svg width="9" height="9" style="left:0;top:0"><path d="M1.5 1.5l6 6M7.5 1.5l-6 6" stroke="#484848" stroke-width="2"/></svg></div>
<div class="tree" style="left:26px;top:291px;width:256px;height:273px">
<div class="hdr" style="width:99px;height:18px"><span style="left:2px">Атрибут</span></div>
<div class="hdr" style="left:99px;width:141px;height:18px"><span>Значення</span></div>
<div style="left:240px;top:0;width:14px;height:271px;background:#f3f1ee;border-left:1px solid #b9b5b0"></div>
<div style="left:240px;top:0;width:14px;height:14px;background:#f6f4f1;border-left:1px solid #b9b5b0;border-bottom:1px solid #b9b5b0"><div class="arrd" style="left:2px;top:4px;transform:rotate(180deg);border-top-width:5px"></div></div>
<div style="left:240px;top:14px;width:14px;height:122px;background:#dcd9d5;border-left:1px solid #b9b5b0;border-bottom:1px solid #b9b5b0"></div>
<div style="left:240px;top:259px;width:14px;height:12px;background:#f6f4f1;border-left:1px solid #b9b5b0;border-top:1px solid #b9b5b0"><div class="arrd" style="left:2px;top:3px;border-top-width:5px"></div></div>
<div class="r" style="top:18px;height:14px;width:240px;line-height:14px">
<svg width="7" height="10" style="left:7px;top:1.5px"><path d="M0 0.3L5.8 5L0 9.7Z" fill="#3a3a3a"/></svg>
<span style="left:22.799999999999997px;top:0px">Тло</span>
<span style="left:103px;top:0px">[, ]</span>
</div>
<div class="r alt" style="top:32px;height:14px;width:240px;line-height:14px">
<svg width="7" height="10" style="left:7px;top:1.5px"><path d="M0 0.3L5.8 5L0 9.7Z" fill="#3a3a3a"/></svg>
<span style="left:22.799999999999997px;top:0px">Границя</span>
<span style="left:103px;top:0px">[0, #000000, Суціл<i>...</i></span>
</div>
<div class="r" style="top:46px;height:24px;width:240px;line-height:24px">
<span class="blue" style="left:22.799999999999997px;top:0px">Шрифт</span>
<div style="left:103px;top:0;width:24px;height:24px;border:1px solid #000;background:#fff"><span style="left:2px;top:0;line-height:22px;font-weight:bold;font-size:13px;left:1.5px">Aa</span></div>
<span style="left:133.5px;top:0px">Liberation_Sa<i>...</i></span>
</div>
<div class="r alt" style="top:70px;height:16px;width:240px;line-height:16px">
<span style="left:22.799999999999997px;top:0px">Колір</span>
<div style="left:103px;top:0;width:16px;height:16px;background:#000"></div>
<span style="left:125.5px;top:0px">#000000</span>
</div>
<div class="r" style="top:86px;height:14px;width:240px;line-height:14px">
<span style="left:22.799999999999997px;top:0px">Кут обер<i>...</i></span>
<span style="left:103px;top:0px">0</span>
</div>
<div class="r alt" style="top:100px;height:14px;width:240px;line-height:14px">
<span style="left:22.799999999999997px;top:0px">Перенес<i>...</i></span>
<span style="left:103px;top:0px">true</span>
</div>
<div class="r" style="top:114px;height:14px;width:240px;line-height:14px">
<span class="blue" style="left:22.799999999999997px;top:0px">Вирівнюв<i>...</i></span>
<span style="left:103px;top:0px">У центрі</span>
</div>
<div class="r alt" style="top:128px;height:14px;width:240px;line-height:14px">
<span style="left:22.799999999999997px;top:0px">У HTML</span>
<span style="left:103px;top:0px">false</span>
</div>
<div class="r" style="top:142px;height:50px;width:240px;line-height:50px">
<span class="blue" style="left:22.799999999999997px;top:0px">Текст</span>
<span style="left:103px;top:10px;line-height:14px;white-space:pre">%1
град.С</span>
</div>
<div class="r alt" style="top:192px;height:14px;width:240px;line-height:14px">
<span class="blue" style="left:22.799999999999997px;top:0px">Кількість<i>...</i></span>
<span style="left:103px;top:0px">1</span>
</div>
<div class="r" style="top:206px;height:14px;width:240px;line-height:14px">
<svg width="10" height="7" style="left:4.5px;top:4.5px"><path d="M0.2 0L9.8 0L5 5.3Z" fill="#3c3c3c"/></svg>
<span style="left:22.799999999999997px;top:0px">Аргумен<i>...</i></span>
<span style="left:103px;top:0px">[Реальний, 300.25<i>...</i></span>
</div>
<div class="r alt" style="top:220px;height:14px;width:240px;line-height:14px">
<span class="blue" style="left:42.8px;top:0px">тип</span>
<span style="left:103px;top:0px">Реальний</span>
</div>
<div class="r" style="top:234px;height:14px;width:240px;line-height:14px">
<span class="blue" style="left:42.8px;top:0px">значе<i>...</i></span>
<span style="left:103px;top:0px">300,25</span>
</div>
<div class="r sel" style="top:248px;height:14px;width:240px;line-height:14px">
<span style="left:42.8px;top:0px">конфі<i>...</i></span>
<span style="left:103px;top:0px">3;f;2</span>
</div>
</div>
</div>
<div id="mdi">
<!-- subwindow: page x292..658, y81..342 ; mdi origin page (291,80) -->
<div id="sub" style="left:0;top:0;width:366px;height:262px">
 <div style="left:0;top:0;width:366px;height:262px;background:#f0ece8;border:1px solid #85898c;border-top:none;border-radius:6px 6px 0 0"></div>
 <div style="left:0;top:0;width:366px;height:24px;border-radius:6px 6px 0 0;background:linear-gradient(#39a6ec 0,#3194da 12%,#2f8ed2 50%,#2a80c4 100%);border:1px solid #18588f;border-bottom-color:#1c5f97"></div>
 <svg width="18" height="18" viewBox="0 0 18 18" style="left:5px;top:3px"><rect x=".5" y=".5" width="17" height="17" fill="#dadada" stroke="#c5b8b2"/><rect x="1" y="1" width="16" height="2.200" fill="#4f9cc6"/><rect x="15.300" y="1" width="1.700" height="2.200" fill="#3a7a9c"/><path d="M5.600 3.800L8.900 11.200H2.200Z" fill="#7ed088" stroke="#3fa856" stroke-width=".8"/><text x="10.800" y="10.600" font-family="Liberation Sans,sans-serif" font-weight="bold" font-style="italic" font-size="8.500" fill="#111">T</text><rect x="1.500" y="11.800" width="15" height="4.700" fill="#ececec"/><text x="2" y="16" font-family="Liberation Sans,sans-serif" font-size="5.200" fill="#333">Values</text></svg>
 <div style="left:56px;top:5px;font-size:12.300px;color:#fff;white-space:nowrap;text-shadow:1px 1px 0 #174f80">Віджет: /wlb_CM101/wdg_elCooler</div>
 <div class="sbtn" style="left:302.500px"><svg width="15" height="15" style="left:0;top:0"><path d="M3.500 11.800h8.200" stroke="#fff" stroke-width="2.500"/></svg></div>
 <div class="sbtn" style="left:322px"><svg width="15" height="15" style="left:0;top:0"><rect x="4.300" y="5" width="7" height="7" fill="none" stroke="#fff" stroke-width="1.500"/><path d="M3.600 5.200h8.400" stroke="#fff" stroke-width="2.400"/></svg></div>
 <div class="sbtn" style="left:342px"><svg width="15" height="15" style="left:0;top:0"><path d="M4.200 4.500l7.600 8M11.800 4.500l-7.600 8" stroke="#fff" stroke-width="2.500"/></svg></div>
 <!-- content: page x297..653, y106..337 -->
 <div style="left:4px;top:24px;width:358px;height:234px;border:1px solid #6a6a6a;border-right-color:#777;border-bottom-color:#777"></div>
 <div id="cont" style="left:5px;top:25px;width:356px;height:231px;background-color:#efebe7;overflow:hidden">
  <div style="left:0;top:0;width:356px;height:231px;background-image:radial-gradient(circle at 2.5px 1.5px,#7d7d7d 0.55px,transparent 0.9px);background-size:4px 4px"></div>
  <!-- canvas page 350..600 x 122..322 -->
  <div style="left:53px;top:16px;width:250px;height:200px;background:#fff">
   <svg width="250" height="200" viewBox="0 0 250 200" style="left:0;top:0">
    <g shape-rendering="crispEdges" stroke="#000" stroke-width="1">
     <path d="M125.5 20.5L205.5 80.5L125.5 140.5L45.5 80.5Z" fill="#d3d3d3"/>
     <path d="M125.5 140.5L175.5 165.5H75.5Z" fill="#d3d3d3"/>
     <path d="M125.5 20.5V140.5M45.5 80.5H205.5" fill="none"/>
    </g>
    <g transform="translate(125.300 79.600)" fill="#f8f838" stroke="#1f9090" stroke-width="1.100">
     <path d="M-4,-9L-10.2,-24.300C-13.400,-33 -6.700,-39.300 0,-39.300C6.700,-39.300 13.400,-33 10.200,-24.300L4,-9Z"/>
     <path d="M-4,-9L-10.2,-24.300C-13.400,-33 -6.700,-39.300 0,-39.300C6.700,-39.300 13.400,-33 10.200,-24.300L4,-9Z" transform="rotate(90)"/>
     <path d="M-4,-9L-10.2,-24.300C-13.400,-33 -6.700,-39.300 0,-39.300C6.700,-39.300 13.400,-33 10.200,-24.300L4,-9Z" transform="rotate(180)"/>
     <path d="M-4,-9L-10.2,-24.300C-13.400,-33 -6.700,-39.300 0,-39.300C6.700,-39.300 13.400,-33 10.200,-24.300L4,-9Z" transform="rotate(270)"/>
    </g>
    <g transform="translate(125.500 80.500)" stroke="#1f9090" stroke-width="1">
     <path d="M0-39.500V38V-39.500M-38.500 0H38.500" stroke="#6e6e12" fill="none" shape-rendering="crispEdges"/>
     <circle cx="0" cy="0" r="9.300" fill="#f03030"/>
     <path d="M0-9V9M-9 0H9" stroke="#8e1212" fill="none" shape-rendering="crispEdges"/>
    </g>
   </svg>
   <div style="left:5px;top:22px;width:70px;height:17px;text-align:center;font-family:'Liberation Sans',sans-serif;font-weight:bold;font-size:14px;line-height:16.5px;white-space:pre">300.25</div>
   <div style="left:5px;top:37.5px;width:70px;height:17px;text-align:center;font-family:'Liberation Sans',sans-serif;font-weight:bold;font-size:14px;line-height:16.5px;white-space:pre">град.С</div>
  </div>
  <div class="h" style="left:55px;top:33px"></div><div class="h" style="left:90px;top:33px"></div><div class="h" style="left:125px;top:33px"></div>
  <div class="h" style="left:55px;top:50px"></div><div class="h" style="left:125px;top:50px"></div>
  <div class="h" style="left:55px;top:67px"></div><div class="h" style="left:90px;top:67px"></div><div class="h" style="left:125px;top:67px"></div>
 </div>
</div>
</div>
<div id="btoolbar"></div>
<div style="left:6px;top:574px;width:2px;height:2px;background:#fbfaf8"></div><div style="left:6px;top:574px;width:1px;height:1px;background:#bfbbb6"></div>
<div style="left:6px;top:577px;width:2px;height:2px;background:#fbfaf8"></div><div style="left:6px;top:577px;width:1px;height:1px;background:#bfbbb6"></div>
<div style="left:6px;top:580px;width:2px;height:2px;background:#fbfaf8"></div><div style="left:6px;top:580px;width:1px;height:1px;background:#bfbbb6"></div>
<div style="left:6px;top:583px;width:2px;height:2px;background:#fbfaf8"></div><div style="left:6px;top:583px;width:1px;height:1px;background:#bfbbb6"></div>
<div style="left:6px;top:586px;width:2px;height:2px;background:#fbfaf8"></div><div style="left:6px;top:586px;width:1px;height:1px;background:#bfbbb6"></div>
<div style="left:6px;top:589px;width:2px;height:2px;background:#fbfaf8"></div><div style="left:6px;top:589px;width:1px;height:1px;background:#bfbbb6"></div>
<div style="left:9px;top:574px;width:2px;height:2px;background:#fbfaf8"></div><div style="left:9px;top:574px;width:1px;height:1px;background:#bfbbb6"></div>
<div style="left:9px;top:577px;width:2px;height:2px;background:#fbfaf8"></div><div style="left:9px;top:577px;width:1px;height:1px;background:#bfbbb6"></div>
<div style="left:9px;top:580px;width:2px;height:2px;background:#fbfaf8"></div><div style="left:9px;top:580px;width:1px;height:1px;background:#bfbbb6"></div>
<div style="left:9px;top:583px;width:2px;height:2px;background:#fbfaf8"></div><div style="left:9px;top:583px;width:1px;height:1px;background:#bfbbb6"></div>
<div style="left:9px;top:586px;width:2px;height:2px;background:#fbfaf8"></div><div style="left:9px;top:586px;width:1px;height:1px;background:#bfbbb6"></div>
<div style="left:9px;top:589px;width:2px;height:2px;background:#fbfaf8"></div><div style="left:9px;top:589px;width:1px;height:1px;background:#bfbbb6"></div>
<svg width="22" height="22" viewBox="0 0 22 22" style="left:18px;top:572px;overflow:visible"><rect x="0.5" y="1.5" width="15" height="15" fill="url(#ggray)" stroke="#8f8f8f" stroke-width="1"/><rect x="4.5" y="5.5" width="16" height="16" fill="url(#gblue2)" stroke="#5a5ad6" stroke-width="1"/></svg>
<svg width="22" height="22" viewBox="0 0 22 22" style="left:49px;top:572px;overflow:visible"><rect x="4.5" y="5.5" width="16" height="16" fill="url(#gblue2)" stroke="#5a5ad6" stroke-width="1"/><rect x="0.5" y="1.5" width="15" height="15" fill="url(#ggray)" stroke="#8f8f8f" stroke-width="1"/></svg>
<svg width="22" height="22" viewBox="0 0 22 22" style="left:79px;top:572px;overflow:visible"><rect x="0.5" y="0.5" width="10" height="10" fill="url(#ggray)" stroke="#8f8f8f" stroke-width="1"/><rect x="11.5" y="11.5" width="10" height="10" fill="url(#ggray)" stroke="#8f8f8f" stroke-width="1"/><rect x="7.5" y="6.5" width="9" height="9" fill="url(#gblue2)" stroke="#5a5ad6" stroke-width="1"/></svg>
<svg width="22" height="22" viewBox="0 0 22 22" style="left:110px;top:572px;overflow:visible"><rect x="7.5" y="6.5" width="9" height="9" fill="url(#gblue2)" stroke="#5a5ad6" stroke-width="1"/><rect x="0.5" y="0.5" width="10" height="10" fill="url(#ggray)" stroke="#8f8f8f" stroke-width="1"/><rect x="11.5" y="11.5" width="10" height="10" fill="url(#ggray)" stroke="#8f8f8f" stroke-width="1"/></svg>
<div style="left:140px;top:575px;width:1px;height:17px;background:#d2cec9"></div><div style="left:141px;top:575px;width:1px;height:17px;background:#fff"></div>
<svg width="22" height="22" viewBox="0 0 22 22" style="left:148px;top:572px;overflow:visible"><rect x="1" y="0" width="2" height="21.500" fill="#111"/><rect x="4.5" y="2.5" width="14" height="7" fill="url(#gyel)" stroke="#e4b424" stroke-width="1"/><rect x="4.5" y="11.5" width="17" height="9" fill="url(#gbl)" stroke="#5c5cde" stroke-width="1"/></svg>
<svg width="22" height="22" viewBox="0 0 22 22" style="left:179px;top:572px;overflow:visible"><rect x="10.500" y="0" width="1.500" height="22" fill="#111"/><rect x="4.5" y="2.5" width="13" height="7" fill="url(#gyel)" stroke="#e4b424" stroke-width="1"/><rect x="2.5" y="11.5" width="17" height="9" fill="url(#gbl)" stroke="#5c5cde" stroke-width="1"/><rect x="10.500" y="9.500" width="1.500" height="2.500" fill="#111"/></svg>
<svg width="22" height="22" viewBox="0 0 22 22" style="left:210px;top:572px;overflow:visible"><rect x="19.500" y="0" width="2" height="21.500" fill="#111"/><rect x="5.5" y="2.5" width="13" height="7" fill="url(#gyel)" stroke="#e4b424" stroke-width="1"/><rect x="1.5" y="11.5" width="17" height="9" fill="url(#gbl)" stroke="#5c5cde" stroke-width="1"/></svg>
<svg width="22" height="22" viewBox="0 0 22 22" style="left:241px;top:572px;overflow:visible"><rect x="0" y="0.800" width="21.500" height="1.800" fill="#111"/><rect x="2.5" y="3.7" width="8" height="13.5" fill="url(#gyelh)" stroke="#e4b424" stroke-width="1"/><rect x="12.5" y="3.7" width="8" height="17" fill="url(#gblh)" stroke="#5c5cde" stroke-width="1"/></svg>
<svg width="22" height="22" viewBox="0 0 22 22" style="left:272px;top:572px;overflow:visible"><rect x="0" y="10.700" width="22" height="1.500" fill="#111"/><rect x="2.5" y="4.5" width="8" height="13" fill="url(#gyelh)" stroke="#e4b424" stroke-width="1"/><rect x="12.5" y="2.5" width="8" height="18" fill="url(#gblh)" stroke="#5c5cde" stroke-width="1"/><rect x="10.500" y="10.700" width="2" height="1.500" fill="#111"/></svg>
<svg width="22" height="22" viewBox="0 0 22 22" style="left:303px;top:572px;overflow:visible"><rect x="2.5" y="4.2" width="8" height="14.5" fill="url(#gyelh)" stroke="#e4b424" stroke-width="1"/><rect x="12.5" y="1.5" width="8" height="17.2" fill="url(#gblh)" stroke="#5c5cde" stroke-width="1"/><rect x="0.500" y="19.400" width="21.500" height="1.800" fill="#111"/></svg>
<div id="status">
<span style="left:652px">100%</span><span style="left:693px">*</span><span style="left:705px">Зміна розміру</span><span style="left:800px">.</span><span style="left:811px;color:#f00000">root</span>
<div style="left:859px;top:11px;width:1px;height:1px;background:#fff"></div><div style="left:858px;top:10px;width:1px;height:1px;background:#a9a5a0"></div><div style="left:859px;top:14px;width:1px;height:1px;background:#fff"></div><div style="left:858px;top:13px;width:1px;height:1px;background:#a9a5a0"></div><div style="left:856px;top:14px;width:1px;height:1px;background:#fff"></div><div style="left:855px;top:13px;width:1px;height:1px;background:#a9a5a0"></div><div style="left:859px;top:17px;width:1px;height:1px;background:#fff"></div><div style="left:858px;top:16px;width:1px;height:1px;background:#a9a5a0"></div><div style="left:856px;top:17px;width:1px;height:1px;background:#fff"></div><div style="left:855px;top:16px;width:1px;height:1px;background:#a9a5a0"></div><div style="left:853px;top:17px;width:1px;height:1px;background:#fff"></div><div style="left:852px;top:16px;width:1px;height:1px;background:#a9a5a0"></div><div style="left:859px;top:20px;width:1px;height:1px;background:#fff"></div><div style="left:858px;top:19px;width:1px;height:1px;background:#a9a5a0"></div><div style="left:856px;top:20px;width:1px;height:1px;background:#fff"></div><div style="left:855px;top:19px;width:1px;height:1px;background:#a9a5a0"></div><div style="left:853px;top:20px;width:1px;height:1px;background:#fff"></div><div style="left:852px;top:19px;width:1px;height:1px;background:#a9a5a0"></div><div style="left:850px;top:20px;width:1px;height:1px;background:#fff"></div><div style="left:849px;top:19px;width:1px;height:1px;background:#a9a5a0"></div>
</div>
</div>
</body></html>
